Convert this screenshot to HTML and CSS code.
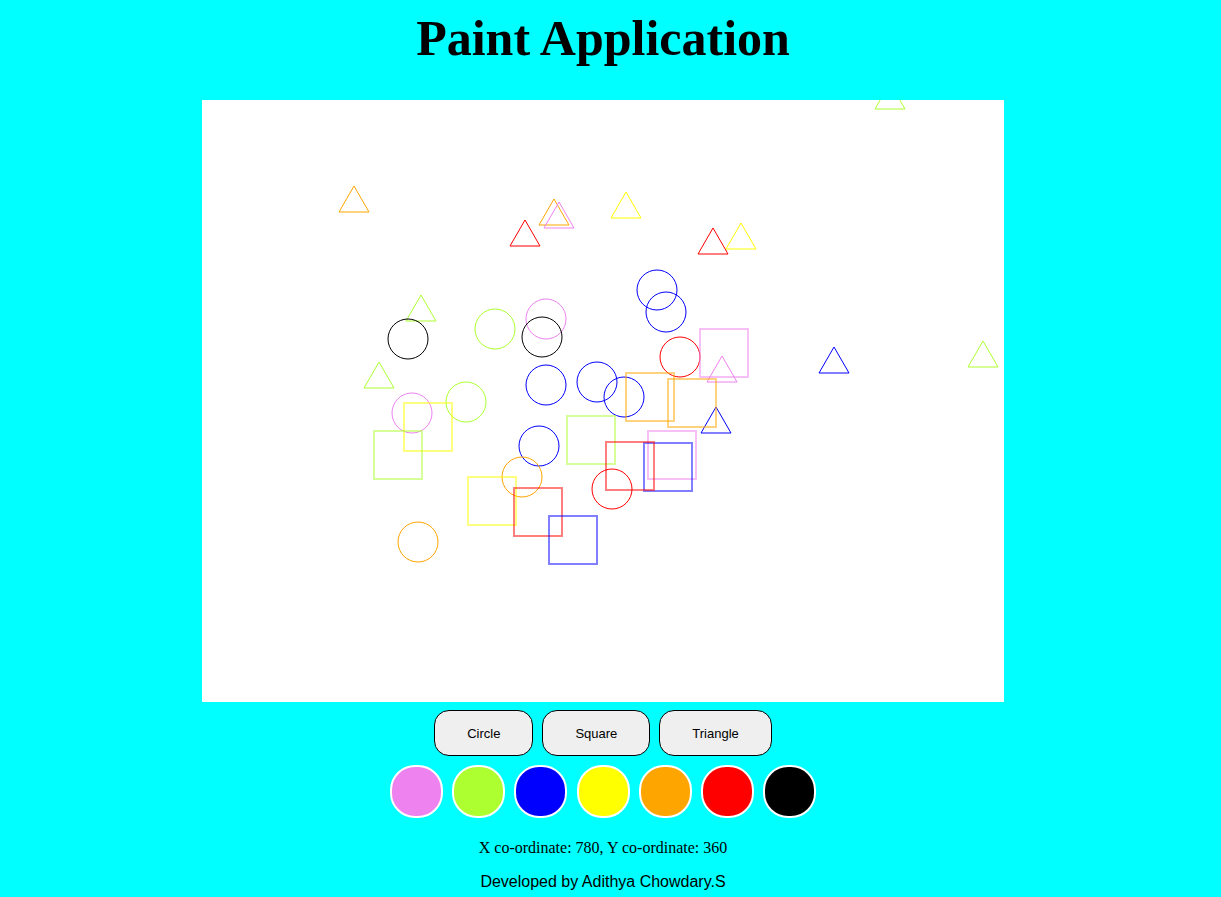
FILE: index.html
```html
<!DOCTYPE html>
<html lang="en">
<head>
<meta charset="utf-8">
<title>Paint Application</title>
<link rel="stylesheet" href="styles.css">
</head>
<body>
<div class="app">
  <h1 class="title">Paint Application</h1>
  <svg class="canvas" width="802" height="602" viewBox="202 100 802 602" xmlns="http://www.w3.org/2000/svg">
    <g class="tris" fill="none" stroke-width="1">
      <polygon points="354,186 339,212 369,212" stroke="orange"/>
      <polygon points="554,199 539,225 569,225" stroke="orange"/>
      <polygon points="559,202 544,228 574,228" stroke="violet"/>
      <polygon points="525,220 510,246 540,246" stroke="red"/>
      <polygon points="421,295 406,321 436,321" stroke="greenyellow"/>
      <polygon points="379,362 364,388 394,388" stroke="greenyellow"/>
      <polygon points="626,192 611,218 641,218" stroke="yellow"/>
      <polygon points="713,228 698,254 728,254" stroke="red"/>
      <polygon points="741,223 726,249 756,249" stroke="yellow"/>
      <polygon points="722,356 707,382 737,382" stroke="violet"/>
      <polygon points="716,407 701,433 731,433" stroke="blue"/>
      <polygon points="890,83 875,109 905,109" stroke="greenyellow"/>
      <polygon points="834,347 819,373 849,373" stroke="blue"/>
      <polygon points="983,341 968,367 998,367" stroke="greenyellow"/>
    </g>
    <g class="circles" fill="none" stroke-width="1">
      <circle cx="408" cy="339" r="20" stroke="black"/>
      <circle cx="495" cy="329" r="20" stroke="greenyellow"/>
      <circle cx="546" cy="319" r="20" stroke="violet"/>
      <circle cx="542" cy="337" r="20" stroke="black"/>
      <circle cx="546" cy="385" r="20" stroke="blue"/>
      <circle cx="657" cy="290" r="20" stroke="blue"/>
      <circle cx="666" cy="312" r="20" stroke="blue"/>
      <circle cx="680" cy="357" r="20" stroke="red"/>
      <circle cx="597" cy="382" r="20" stroke="blue"/>
      <circle cx="624" cy="397" r="20" stroke="blue"/>
      <circle cx="412" cy="413" r="20" stroke="violet"/>
      <circle cx="466" cy="402" r="20" stroke="greenyellow"/>
      <circle cx="539" cy="446" r="20" stroke="blue"/>
      <circle cx="522" cy="477" r="20" stroke="orange"/>
      <circle cx="418" cy="542" r="20" stroke="orange"/>
      <circle cx="612" cy="489" r="20" stroke="red"/>
    </g>
    <g class="squares" fill="none" stroke-width="2" stroke-opacity="0.5">
      <rect x="700" y="329" width="48" height="48" stroke="violet"/>
      <rect x="626" y="373" width="48" height="48" stroke="orange"/>
      <rect x="668" y="379" width="48" height="48" stroke="orange"/>
      <rect x="567" y="416" width="48" height="48" stroke="greenyellow"/>
      <rect x="648" y="431" width="48" height="48" stroke="violet"/>
      <rect x="644" y="443" width="48" height="48" stroke="blue"/>
      <rect x="606" y="442" width="48" height="48" stroke="red"/>
      <rect x="404" y="403" width="48" height="48" stroke="yellow"/>
      <rect x="374" y="431" width="48" height="48" stroke="greenyellow"/>
      <rect x="468" y="477" width="48" height="48" stroke="yellow"/>
      <rect x="514" y="488" width="48" height="48" stroke="red"/>
      <rect x="549" y="516" width="48" height="48" stroke="blue"/>
    </g>
  </svg>
  <div class="tools">
    <button class="tool">Circle</button>
    <button class="tool">Square</button>
    <button class="tool">Triangle</button>
  </div>
  <div class="palette">
    <span class="swatch swatch-violet"></span>
    <span class="swatch swatch-green"></span>
    <span class="swatch swatch-blue"></span>
    <span class="swatch swatch-yellow"></span>
    <span class="swatch swatch-orange"></span>
    <span class="swatch swatch-red"></span>
    <span class="swatch swatch-black"></span>
  </div>
  <p class="coords">X co-ordinate: 780, Y co-ordinate: 360</p>
  <p class="credit">Developed by Adithya Chowdary.S</p>
</div>
</body>
</html>
```
FILE: styles.css
```css
html {
  overflow: hidden;
}

body {
  margin: 8px 23px 0 8px;
  background: #00ffff;
  font-family: "Liberation Serif", "Times New Roman", serif;
}

.app {
  display: flex;
  flex-direction: column;
  align-items: center;
}

.title {
  margin: 1px 0 0;
  font-family: "Liberation Serif", "Times New Roman", serif;
  font-weight: bold;
  font-size: 50px;
  line-height: 58px;
  color: #000;
}

.canvas {
  display: block;
  margin-top: 33px;
  background: #fff;
  overflow: hidden;
}

.tools {
  display: flex;
  gap: 9px;
  margin-top: 8px;
}

.tool {
  height: 46px;
  padding: 0 32px;
  background: #efefef;
  border: 1px solid #000;
  border-radius: 15px;
  font-family: "Liberation Sans", Arial, sans-serif;
  font-size: 13px;
  color: #000;
}

.palette {
  display: flex;
  gap: 9.3px;
  margin-top: 9px;
}

.swatch {
  display: block;
  width: 49px;
  height: 49px;
  border: 2px solid #fff;
  border-radius: 25px;
}

.swatch-violet { background: violet; }
.swatch-green { background: greenyellow; }
.swatch-blue { background: blue; }
.swatch-yellow { background: yellow; }
.swatch-orange { background: orange; }
.swatch-red { background: red; }
.swatch-black { background: black; }

.coords {
  margin: 21px 0 0;
  font-family: "Liberation Serif", "Times New Roman", serif;
  font-size: 16px;
  line-height: 18px;
  color: #000;
}

.credit {
  margin: 16px 0 0;
  font-family: "Liberation Sans", Arial, sans-serif;
  font-size: 16px;
  line-height: 18px;
  color: #000;
}
```
